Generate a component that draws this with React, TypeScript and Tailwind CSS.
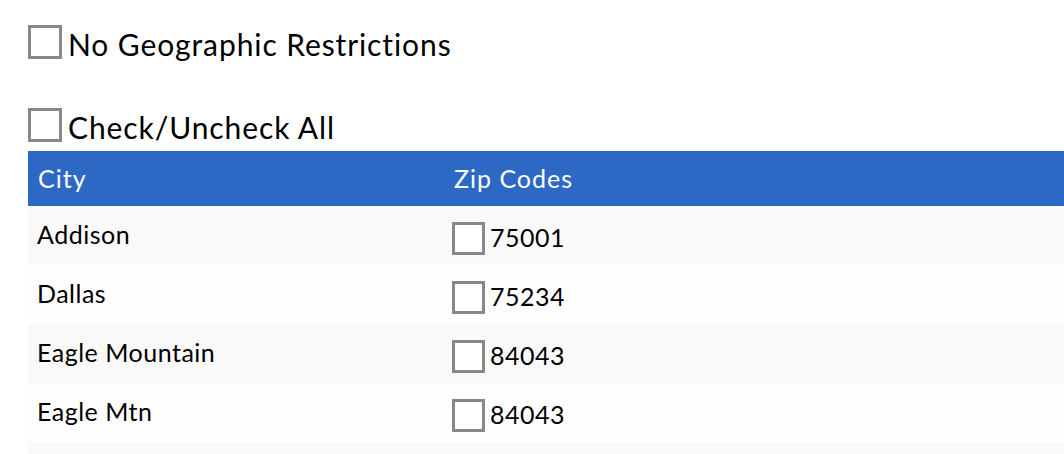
const rows = [
  { city: 'Addison', zip: '75001' },
  { city: 'Dallas', zip: '75234' },
  { city: 'Eagle Mountain', zip: '84043' },
  { city: 'Eagle Mtn', zip: '84043' },
]

function Box({ size = 'lg' }: { size?: 'lg' | 'sm' }) {
  return (
    <span
      className={
        size === 'lg'
          ? 'inline-block h-[34px] w-[34px] shrink-0 border-[3px] border-[#888888] bg-white'
          : 'inline-block h-[33px] w-[33px] shrink-0 border-[3px] border-[#888888] bg-white'
      }
    />
  )
}

export default function App() {
  return (
    <div className="h-[454px] w-[1064px] overflow-hidden bg-white pl-[28px] font-['Lato',sans-serif] text-black">
      {/* top options */}
      <label className="mt-[25px] flex items-end gap-[6px]">
        <Box />
        <span className="text-[30px] leading-[30px] tracking-[0.9px]">No Geographic Restrictions</span>
      </label>

      <label className="mt-[49px] flex items-end gap-[6px]">
        <Box />
        <span className="text-[30px] leading-[30px] tracking-[0.9px]">Check/Uncheck All</span>
      </label>

      {/* table */}
      <div className="mt-[9px]">
        <div className="grid h-[55px] grid-cols-[416px_1fr] items-center bg-[#2d69c4] text-[25px] tracking-[1px] text-white">
          <div className="pl-[10px]">City</div>
          <div className="pl-[10px]">Zip Codes</div>
        </div>
        {rows.map((r, i) => (
          <div
            key={r.city}
            className={`grid h-[59px] grid-cols-[416px_1fr] items-center text-[25px] tracking-[0.5px] ${
              i % 2 === 0 ? 'bg-[#f9f9f9]' : 'bg-[#fefefe]'
            }`}
          >
            <div className="pb-[2px] pl-[9px]">{r.city}</div>
            <div className="flex items-center gap-[5px] pl-[8px] pt-[5px]">
              <Box size="sm" />
              <span>{r.zip}</span>
            </div>
          </div>
        ))}
        <div className="h-[59px] bg-[#f9f9f9]" />
      </div>
    </div>
  )
}
